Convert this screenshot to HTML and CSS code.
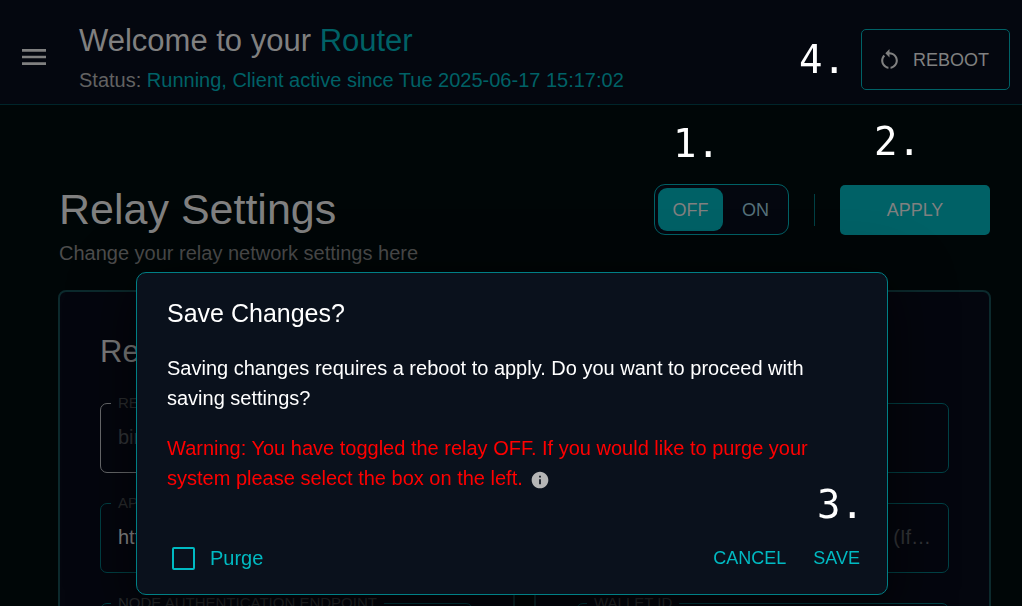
FILE: index.html
```html
<!DOCTYPE html>
<html lang="en">
<head>
<meta charset="utf-8">
<title>Relay Settings</title>
<link rel="stylesheet" href="styles.css">
</head>
<body>
<header class="topbar">
  <button class="menu" aria-label="Menu"><svg viewBox="0 0 24 24" width="32" height="32"><path d="M3 18h18v-2H3zm0-5h18v-2H3zm0-7v2h18V6z"/></svg></button>
  <div class="welcome">
    <h1>Welcome to your <span class="accent">Router</span></h1>
    <p>Status: <span class="accent">Running, Client active since Tue 2025-06-17 15:17:02</span></p>
  </div>
  <button class="reboot"><svg viewBox="0 0 24 24" width="25" height="25"><path d="M12 5V2L8 6l4 4V7c3.31 0 6 2.69 6 6 0 2.97-2.17 5.43-5 5.91v2.02c3.95-.49 7-3.85 7-7.93 0-4.42-3.58-8-8-8m-6 8c0-1.65.67-3.15 1.76-4.24L6.34 7.34C4.9 8.79 4 10.79 4 13c0 4.08 3.05 7.44 7 7.93v-2.02c-2.83-.48-5-2.94-5-5.91"/></svg>REBOOT</button>
</header>
<main class="page">
  <section class="heading">
    <div class="title">
      <h2>Relay Settings</h2>
      <p>Change your relay network settings here</p>
    </div>
    <div class="actions">
      <div class="toggle">
        <button class="on" aria-pressed="true">OFF</button>
        <button aria-pressed="false">ON</button>
      </div>
      <span class="divider"></span>
      <button class="apply">APPLY</button>
    </div>
  </section>
  <div class="cards">
    <section class="card">
      <h3>Re</h3>
      <fieldset class="field hover">
        <legend><label for="relay">RE</label></legend>
        <input id="relay" placeholder="bin">
      </fieldset>
      <fieldset class="field">
        <legend><label for="api">AP</label></legend>
        <input id="api" value="http">
      </fieldset>
      <fieldset class="field">
        <legend><label for="node">NODE AUTHENTICATION ENDPOINT</label></legend>
        <input id="node">
      </fieldset>
    </section>
    <section class="card">
      <h3></h3>
      <fieldset class="field">
        <legend></legend>
        <input aria-label="Relay option">
      </fieldset>
      <fieldset class="field optional">
        <legend></legend>
        <input aria-label="Optional setting" placeholder="(If…">
      </fieldset>
      <fieldset class="field">
        <legend><label for="wallet">WALLET ID</label></legend>
        <input id="wallet">
      </fieldset>
    </section>
  </div>
</main>
<div class="backdrop">
  <div class="dialog" role="dialog" aria-modal="true" aria-labelledby="dlg">
    <h2 id="dlg">Save Changes?</h2>
    <p>Saving changes requires a reboot to apply. Do you want to proceed with saving settings?</p>
    <p class="warning">Warning: You have toggled the relay OFF. If you would like to purge your system please select the box on the left. <svg viewBox="0 0 24 24" width="20" height="20"><path d="M12 2C6.480 2 2 6.480 2 12s4.480 10 10 10 10-4.480 10-10S17.520 2 12 2m1 15h-2v-6h2zm0-8h-2V7h2z"/></svg></p>
    <div class="footer">
      <label class="purge"><input type="checkbox">Purge</label>
      <button>CANCEL</button>
      <button>SAVE</button>
    </div>
  </div>
</div>
<span class="note one">1.</span>
<span class="note two">2.</span>
<span class="note three">3.</span>
<span class="note four">4.</span>
</body>
</html>
```
FILE: styles.css
```css
* { box-sizing: border-box; }
body {
  margin: 0;
  height: 100vh;
  overflow: hidden;
  background: #000607;
  color: #808080;
  font: 20px/30px "Liberation Sans", Arial, sans-serif;
}
h1, h2, h3, p { margin: 0; font-weight: 400; }
button { font: inherit; color: inherit; background: none; border: 0; padding: 0; }
svg { fill: currentColor; flex: none; }
.accent { color: #006166; }

.topbar {
  display: flex;
  align-items: center;
  height: 105px;
  padding: 0 12px 0 18px;
  background: #04070f;
  border-bottom: 1px solid #00252a;
}
.menu { display: flex; margin-top: 10px; }
.welcome { flex: 1; padding: 16px 0 0 29px; }
.welcome h1 { font-size: 31px; line-height: 40px; }
.welcome p { line-height: 38px; color: #626262; }
.reboot {
  display: flex;
  align-items: center;
  justify-content: center;
  gap: 11px;
  width: 149px;
  height: 61px;
  margin-top: 14px;
  padding: 1px 5px 0 0;
  border: 1px solid #006166;
  border-radius: 5px;
  font-size: 18px;
}

.page { padding: 76px 31px 0 58px; }
.heading { display: flex; justify-content: space-between; padding: 0 1px; }
.title h2 { font-size: 43px; line-height: 56px; }
.title p { color: #4d4d4d; line-height: 32px; }
.actions { display: flex; align-items: center; height: 57px; font-size: 18px; }
.toggle {
  display: flex;
  width: 135px;
  height: 51px;
  padding: 3px 0 3px 3px;
  background: #04070f;
  border: 1px solid #006166;
  border-radius: 11px;
}
.toggle button { flex: 1; border-radius: 9px; color: #56707a; }
.toggle .on { background: #006166; color: #808080; }
.divider { width: 1px; height: 32px; margin: 0 25px; background: #004044; }
.apply { width: 150px; height: 50px; border-radius: 5px; background: #006166; }

.cards { display: flex; gap: 19px; margin-top: 21px; }
.card {
  flex: 1;
  min-width: 0;
  padding: 40px 40px 20px;
  background: #04060e;
  border: 2px solid #0c2a2d;
  border-radius: 8px;
}
.card h3 { height: 40px; font-size: 31px; line-height: 40px; }
.field {
  min-width: 0;
  height: 80px;
  margin: 20px 0 0;
  padding: 0 17px;
  border: 1px solid #004246;
  border-radius: 7px;
}
.field legend { height: 20px; margin-left: -7px; padding: 0 7px; font-size: 15px; line-height: 20px; color: #2c2e30; }
.field input { width: 100%; height: 48px; padding: 0; border: 0; background: none; color: #909090; font: inherit; }
.field input::placeholder { color: #34363a; opacity: 1; }
.card h3 + .field { margin-top: 21px; }
.hover { border-color: #6c6e70; }
.optional input { text-align: right; }

.backdrop { position: fixed; inset: 0; display: flex; align-items: flex-start; justify-content: center; padding: 272px 134px 0 136px; }
.dialog {
  width: 752px;
  padding: 24px 27px 11px 30px;
  background: #0a111c;
  border: 1px solid #007f85;
  border-radius: 10px;
  color: #fff;
  box-shadow: 0 14px 19px -9px rgba(0,0,0,.2), 0 30px 48px 4px rgba(0,0,0,.14), 0 11px 58px 10px rgba(0,0,0,.4);
}
.dialog h2 { font-size: 25px; line-height: 32px; }
.dialog p { margin-top: 24px; }
.dialog .warning { margin-top: 20px; color: #f00; }
.warning svg { margin-left: 2px; color: #b5b5b5; vertical-align: -5px; }
.footer { display: flex; align-items: center; gap: 27px; height: 50px; margin-top: 40px; color: #00bac2; font-size: 18px; }
.purge { display: flex; align-items: center; gap: 15px; margin-right: auto; font-size: 20px; }
.purge input { appearance: none; width: 23px; height: 23px; margin: 0 0 0 5px; border: 2px solid #00bac2; border-radius: 2px; }

.note { position: fixed; color: #fff; font: 39px/48px "DejaVu Sans Mono", monospace; }
.one { left: 673px; top: 120px; }
.two { left: 874px; top: 118px; }
.three { left: 817px; top: 481px; }
.four { left: 799px; top: 36px; }
```
